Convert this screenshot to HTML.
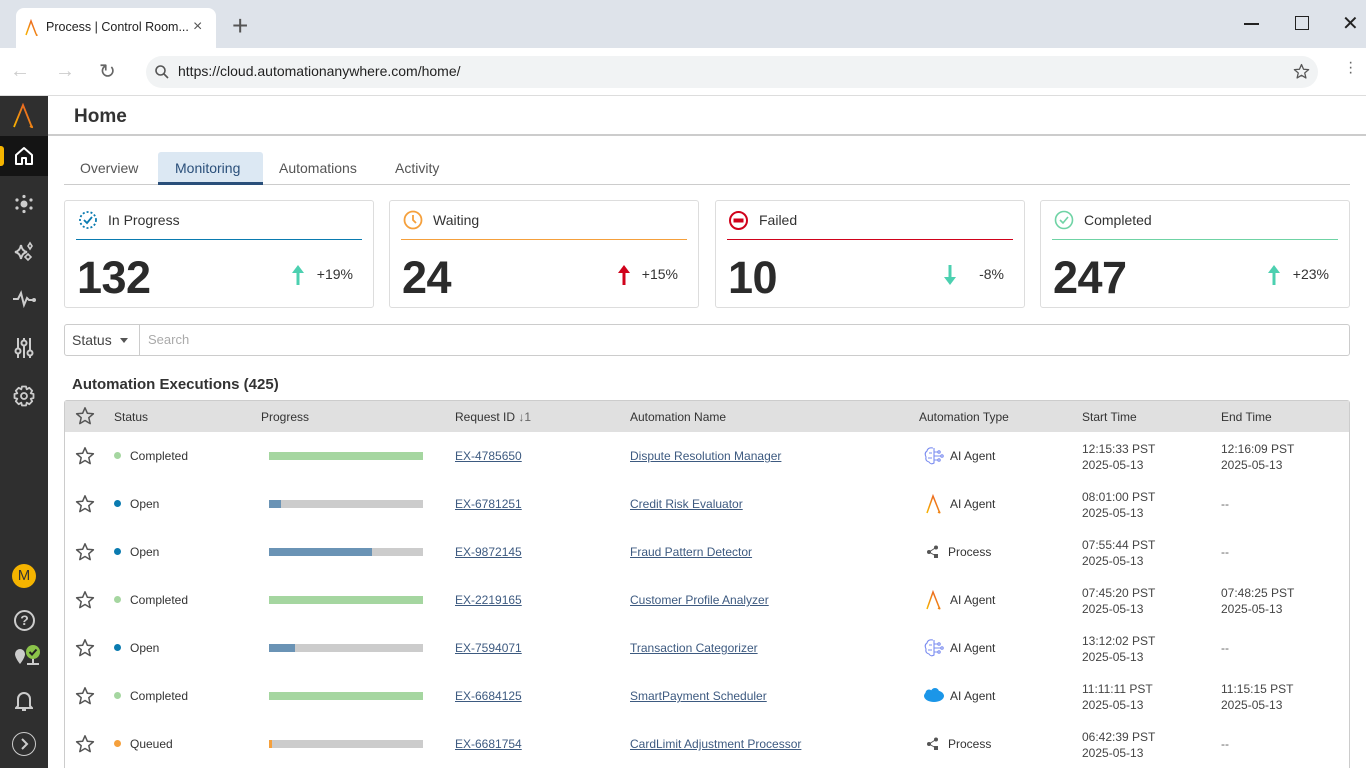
<!DOCTYPE html>
<html><head><meta charset="utf-8"><style>
*{margin:0;padding:0;box-sizing:border-box}
html,body{width:1366px;height:768px;overflow:hidden}
body{font-family:"Liberation Sans",sans-serif;background:#fff;position:relative;color:#222}
.a{position:absolute}
.t{font-size:12px;color:#333;white-space:nowrap}
.lnk{color:#3d5a80;text-decoration:underline;font-size:12px;white-space:nowrap}
.card{position:absolute;top:200px;width:310px;height:108px;border:1px solid #ddd;border-radius:3px;background:#fff}
.card .ti{position:absolute;left:43px;top:11px;font-size:14px;color:#333}
.card .ln{position:absolute;left:11px;right:11px;top:38px;height:1px}
.card .num{position:absolute;left:12px;top:51px;font-size:45px;font-weight:bold;color:#2b2b2b;letter-spacing:-0.5px}
.card .pc{position:absolute;right:20px;top:65px;font-size:14px;color:#333}
.card .ar{position:absolute;top:64px}
.bar{position:absolute;left:269px;width:154px;height:8px;background:#ccc}
.bar i{display:block;height:8px}
.dot{position:absolute;left:114px;width:7px;height:7px;border-radius:50%}
</style></head><body>
<svg width="0" height="0" style="position:absolute"><defs><symbol id="star" viewBox="0 0 20 20"><path d="M10 1.8 L12.4 7.3 L18.4 7.8 L13.8 11.7 L15.2 17.6 L10 14.5 L4.8 17.6 L6.2 11.7 L1.6 7.8 L7.6 7.3 Z" fill="none" stroke="#555" stroke-width="1.5" stroke-linejoin="round"/></symbol><linearGradient id="g" x1="0" y1="1" x2="1" y2="0"><stop offset="0" stop-color="#f7b500"/><stop offset="1" stop-color="#e8532b"/></linearGradient></defs></svg>
<div class="a" style="left:0;top:0;width:1366px;height:48px;background:#dee3ea"></div>
<div class="a" style="left:16px;top:8px;width:200px;height:40px;background:#fff;border-radius:8px 8px 0 0"></div>
<svg class="a" style="left:24px;top:19px" width="16" height="18" viewBox="0 0 16 18"><path d="M2 16 L7 2 L12 15 Q14 17 12 16" fill="none" stroke="url(#g)" stroke-width="1.5"/></svg>
<div class="a" style="left:46px;top:20px;font-size:12.5px;color:#222">Process | Control Room...</div>
<div class="a" style="left:193px;top:18px;font-size:16px;color:#555">×</div>
<div class="a" style="left:232px;top:10px;font-size:28px;color:#555;font-weight:300">+</div>
<div class="a" style="left:1244px;top:23px;width:15px;height:1.5px;background:#222"></div>
<div class="a" style="left:1295px;top:16px;width:14px;height:14px;border:1.5px solid #222"></div>
<div class="a" style="left:1342px;top:11px;font-size:20px;color:#222">✕</div>
<div class="a" style="left:0;top:48px;width:1366px;height:48px;background:#fff;border-bottom:1px solid #ddd"></div>
<div class="a" style="left:10px;top:60px;font-size:20px;color:#ccc">←</div>
<div class="a" style="left:55px;top:60px;font-size:20px;color:#ccc">→</div>
<div class="a" style="left:99px;top:59px;font-size:20px;color:#666">↻</div>
<div class="a" style="left:146px;top:56px;width:1172px;height:32px;background:#f1f3f4;border-radius:16px"></div>
<svg class="a" style="left:154px;top:64px" width="16" height="16"><circle cx="6.5" cy="6.5" r="4.5" fill="none" stroke="#555" stroke-width="1.6"/><path d="M10 10 L14 14" stroke="#555" stroke-width="1.6"/></svg>
<div class="a" style="left:178px;top:63px;font-size:14px;color:#222">https://cloud.automationanywhere.com/home/</div>
<svg class="a" style="left:1293px;top:63px" width="17" height="17"><use href="#star" width="17" height="17"/></svg>
<div class="a" style="left:1348px;top:60px;font-size:16px;color:#666;line-height:5px">·<br>·<br>·</div>
<div class="a" style="left:0;top:96px;width:48px;height:672px;background:#2f2f2f"></div>
<svg class="a" style="left:12px;top:103px" width="24" height="26" viewBox="0 0 24 26"><path d="M2 24 L11 2 L19 22 Q22 26 18 23" fill="none" stroke="url(#g)" stroke-width="1.8"/></svg>
<div class="a" style="left:0;top:136px;width:48px;height:40px;background:#141414"></div>
<div class="a" style="left:0;top:146px;width:4px;height:20px;background:#f5b400;border-radius:0 3px 3px 0"></div>
<svg class="a" style="left:14px;top:146px" width="20" height="20" viewBox="0 0 20 20"><path d="M2 9 L10 2 L18 9 V18 H12 V12 H8 V18 H2 Z" fill="none" stroke="#fff" stroke-width="2" stroke-linejoin="round"/></svg>
<svg class="a" style="left:14px;top:194px" width="20" height="20"><circle cx="10" cy="10" r="3.5" fill="#ccc"/><g fill="#ccc"><circle cx="10" cy="2.5" r="1.6"/><circle cx="10" cy="17.5" r="1.6"/><circle cx="3" cy="6" r="1.6"/><circle cx="17" cy="6" r="1.6"/><circle cx="3" cy="14" r="1.6"/><circle cx="17" cy="14" r="1.6"/></g></svg>
<svg class="a" style="left:13px;top:241px" width="22" height="22" viewBox="0 0 22 22"><path d="M8 4 Q9 10 14 11 Q9 12 8 18 Q7 12 2 11 Q7 10 8 4Z" fill="none" stroke="#ccc" stroke-width="2"/><path d="M17 2 L19 5 L17 8 L15 5Z M15 13 L18 16 L15 19 L12 16Z" fill="none" stroke="#ccc" stroke-width="1.6"/></svg>
<svg class="a" style="left:12px;top:290px" width="24" height="18"><path d="M1 9 H6 L9 3 L12 15 L15 8 L17 10 H22" fill="none" stroke="#ccc" stroke-width="2"/><circle cx="22" cy="10" r="2" fill="#ccc"/></svg>
<svg class="a" style="left:14px;top:337px" width="20" height="22"><g stroke="#ccc" stroke-width="2" fill="none"><path d="M4 1V21M10 1V21M16 1V21"/><circle cx="4" cy="14" r="2.5" fill="#2f2f2f"/><circle cx="10" cy="6" r="2.5" fill="#2f2f2f"/><circle cx="16" cy="16" r="2.5" fill="#2f2f2f"/></g></svg>
<svg class="a" style="left:13px;top:385px" width="22" height="22" viewBox="0 0 22 22"><path d="M9 1.5 H13 L13.7 4.3 L16.3 2.8 L19.2 5.7 L17.7 8.3 L20.5 9 V13 L17.7 13.7 L19.2 16.3 L16.3 19.2 L13.7 17.7 L13 20.5 H9 L8.3 17.7 L5.7 19.2 L2.8 16.3 L4.3 13.7 L1.5 13 V9 L4.3 8.3 L2.8 5.7 L5.7 2.8 L8.3 4.3 Z" fill="none" stroke="#ccc" stroke-width="1.8" stroke-linejoin="round"/><circle cx="11" cy="11" r="3" fill="none" stroke="#ccc" stroke-width="1.8"/></svg>
<div class="a" style="left:12px;top:564px;width:24px;height:24px;border-radius:50%;background:#f5b400;color:#333;font-size:15px;text-align:center;line-height:24px">M</div>
<div class="a" style="left:14px;top:610px;width:21px;height:21px;border-radius:50%;border:2px solid #ccc;color:#ccc;font-size:14px;font-weight:bold;text-align:center;line-height:17px">?</div>
<svg class="a" style="left:13px;top:644px" width="28" height="26"><path d="M7 8 a5 5 0 0 1 10 0 c0 4-5 10-5 10 s-5-6-5-10z" fill="#ccc" transform="translate(-5,2)"/><path d="M14 20 H26 M20 14 V20" stroke="#ccc" stroke-width="2"/><circle cx="20" cy="8" r="7" fill="#8bc34a"/><path d="M16.5 8 L19 10.5 L23.5 5.5" stroke="#222" stroke-width="2" fill="none"/></svg>
<svg class="a" style="left:15px;top:690px" width="18" height="22"><path d="M3 16 V9 a6 6 0 0 1 12 0 V16 L17 18 H1 Z" fill="none" stroke="#ccc" stroke-width="2"/><path d="M7 20 H11" stroke="#ccc" stroke-width="2"/></svg>
<div class="a" style="left:12px;top:732px;width:24px;height:24px;border-radius:50%;border:1.5px solid #ccc"></div>
<svg class="a" style="left:20px;top:738px" width="10" height="12"><path d="M2 1 L7 6 L2 11" fill="none" stroke="#ccc" stroke-width="2"/></svg>
<div class="a" style="left:74px;top:106px;font-size:19px;font-weight:bold;color:#333">Home</div>
<div class="a" style="left:48px;top:134px;width:1318px;height:2px;background:#ccc"></div>
<div class="a" style="left:64px;top:184px;width:1286px;height:1px;background:#ccc"></div>
<div class="a" style="left:158px;top:152px;width:105px;height:33px;background:#dce8f3;border-radius:3px 3px 0 0;border-bottom:3px solid #2a4f7a"></div>
<div class="a" style="left:80px;top:160px;font-size:14px;color:#555">Overview</div>
<div class="a" style="left:175px;top:160px;font-size:14px;color:#2a4f7a">Monitoring</div>
<div class="a" style="left:279px;top:160px;font-size:14px;color:#555">Automations</div>
<div class="a" style="left:395px;top:160px;font-size:14px;color:#555">Activity</div>
<div class="card" style="left:64px">
<svg class="a" style="left:13px;top:9px" width="20" height="20"><circle cx="10" cy="10" r="8" fill="none" stroke="#0a7bb0" stroke-width="1.8" stroke-dasharray="2 2"/><path d="M6 10 L9 13 L14 7" fill="none" stroke="#0a7bb0" stroke-width="1.8"/></svg>
<div class="ti">In Progress</div><div class="ln" style="background:#0a7bb0"></div>
<div class="num">132</div>
<svg class="ar" style="left:227px" width="12" height="20"><path d="M6 0 L12 8 H7.5 V20 H4.5 V8 H0Z" fill="#4cd0b0"/></svg>
<div class="pc">+19%</div></div>
<div class="card" style="left:389px">
<svg class="a" style="left:13px;top:9px" width="20" height="20"><circle cx="10" cy="10" r="8.5" fill="none" stroke="#f5a03c" stroke-width="1.8"/><path d="M10 5 V10 L13 13" fill="none" stroke="#f5a03c" stroke-width="1.8"/></svg>
<div class="ti">Waiting</div><div class="ln" style="background:#f5a03c"></div>
<div class="num">24</div>
<svg class="ar" style="left:228px" width="12" height="20"><path d="M6 0 L12 8 H7.5 V20 H4.5 V8 H0Z" fill="#d0021b"/></svg>
<div class="pc">+15%</div></div>
<div class="card" style="left:715px">
<svg class="a" style="left:12px;top:9px" width="21" height="21"><circle cx="10.5" cy="10.5" r="8.5" fill="none" stroke="#d0021b" stroke-width="2"/><rect x="5.5" y="8.5" width="10" height="4" fill="#d0021b"/></svg>
<div class="ti" style="left:43px">Failed</div><div class="ln" style="background:#d0021b"></div>
<div class="num">10</div>
<svg class="ar" style="left:228px" width="12" height="20"><path d="M6 20 L12 12 H7.5 V0 H4.5 V12 H0Z" fill="#4cd0b0"/></svg>
<div class="pc">-8%</div></div>
<div class="card" style="left:1040px">
<svg class="a" style="left:13px;top:9px" width="20" height="20"><circle cx="10" cy="10" r="8.5" fill="none" stroke="#6fd3a5" stroke-width="1.6"/><path d="M6 10 L9 13 L14 7" fill="none" stroke="#6fd3a5" stroke-width="1.6"/></svg>
<div class="ti">Completed</div><div class="ln" style="background:#6fd3a5"></div>
<div class="num">247</div>
<svg class="ar" style="left:227px" width="12" height="20"><path d="M6 0 L12 8 H7.5 V20 H4.5 V8 H0Z" fill="#4cd0b0"/></svg>
<div class="pc">+23%</div></div>
<div class="a" style="left:64px;top:324px;width:1286px;height:32px;border:1px solid #ccc;border-radius:3px"></div>
<div class="a" style="left:139px;top:325px;width:1px;height:30px;background:#ccc"></div>
<div class="a" style="left:72px;top:332px;font-size:14px;color:#444">Status</div>
<div class="a" style="left:120px;top:338px;border:4px solid transparent;border-top:5px solid #555"></div>
<div class="a" style="left:148px;top:332px;font-size:13px;color:#aaa">Search</div>
<div class="a" style="left:72px;top:376px;font-size:15px;font-weight:bold;color:#333">Automation Executions (425)</div>
<div class="a" style="left:64px;top:400px;width:1286px;height:368px;border:1px solid #ccc;border-bottom:none;border-radius:3px 3px 0 0"></div>
<div class="a" style="left:65px;top:401px;width:1284px;height:31px;background:#e0e0e0"></div>
<svg class="a" style="left:75px;top:406px" width="20" height="20"><use href="#star"/></svg>
<div class="a t" style="left:114px;top:410px">Status</div>
<div class="a t" style="left:261px;top:410px">Progress</div>
<div class="a t" style="left:455px;top:410px">Request ID <span style="color:#666">↓1</span></div>
<div class="a t" style="left:630px;top:410px">Automation Name</div>
<div class="a t" style="left:919px;top:410px">Automation Type</div>
<div class="a t" style="left:1082px;top:410px">Start Time</div>
<div class="a t" style="left:1221px;top:410px">End Time</div>
<div id="rows"></div>
<script>
var R=[["Completed","#a5d6a0",100,"EX-4785650","Dispute Resolution Manager","b","AI Agent","12:15:33 PST","12:16:09 PST"],
["Open","#0a7bb0",8,"EX-6781251","Credit Risk Evaluator","a","AI Agent","08:01:00 PST",""],
["Open","#0a7bb0",67,"EX-9872145","Fraud Pattern Detector","p","Process","07:55:44 PST",""],
["Completed","#a5d6a0",100,"EX-2219165","Customer Profile Analyzer","a","AI Agent","07:45:20 PST","07:48:25 PST"],
["Open","#0a7bb0",17,"EX-7594071","Transaction Categorizer","b","AI Agent","13:12:02 PST",""],
["Completed","#a5d6a0",100,"EX-6684125","SmartPayment Scheduler","s","AI Agent","11:11:11 PST","11:15:15 PST"],
["Queued","#f5a03c",2,"EX-6681754","CardLimit Adjustment Processor","p","Process","06:42:39 PST",""]];
var ic={b:'<svg width="22" height="22" viewBox="0 0 22 22"><g fill="none" stroke="#7a8cf0" stroke-width="1.1"><path d="M10 3 Q5 2 4 6 Q1 8 3 12 Q2 16 6 17 Q8 20 11 18 V3"/><path d="M11 7 H15 M11 11 H18 M11 15 H15 M6 8 H9 M5 13 H9"/><circle cx="16" cy="7" r="1.2"/><circle cx="19" cy="11" r="1.2"/><circle cx="16" cy="15" r="1.2"/></g></svg>',
a:'<svg width="22" height="22" viewBox="0 0 22 22"><path d="M4 20 L10 3 L16 18 Q18 21 15 19" fill="none" stroke="url(#g)" stroke-width="1.5"/></svg>',
p:'<svg width="22" height="22" viewBox="0 0 22 22"><g fill="#555"><circle cx="6" cy="11" r="2"/><circle cx="13" cy="6.5" r="2"/><rect x="11" y="13" width="4" height="4"/></g><path d="M6 11 L13 6.5 M6 11 L13 15" stroke="#555"/></svg>',
s:'<svg width="22" height="22" viewBox="0 0 22 22"><ellipse cx="11" cy="11" rx="10" ry="6" fill="#1b96e8"/><circle cx="6" cy="8" r="3.5" fill="#1b96e8"/><circle cx="12" cy="7" r="4" fill="#1b96e8"/></svg>'};
var h='';R.forEach(function(r,i){var y=456+i*48;var pw=Math.round(154*r[2]/100);var pc=r[0]=="Completed"?"#a5d6a0":(r[0]=="Queued"?"#f5a03c":"#6a93b5");
h+='<svg class="a" style="left:75px;top:'+(y-10)+'px" width="20" height="20"><use href="#star"/></svg>';
h+='<div class="dot" style="top:'+(y-4)+'px;background:'+r[1]+'"></div>';
h+='<div class="a t" style="left:130px;top:'+(y-7)+'px">'+r[0]+'</div>';
h+='<div class="bar" style="top:'+(y-4)+'px"><i style="width:'+pw+'px;background:'+pc+'"></i></div>';
h+='<div class="a lnk" style="left:455px;top:'+(y-7)+'px">'+r[3]+'</div>';
h+='<div class="a lnk" style="left:630px;top:'+(y-7)+'px">'+r[4]+'</div>';
h+='<div class="a" style="left:923px;top:'+(y-11)+'px">'+ic[r[5]]+'</div>';
h+='<div class="a t" style="left:'+(r[6]=="Process"?948:950)+'px;top:'+(y-7)+'px">'+r[6]+'</div>';
h+='<div class="a t" style="left:1082px;top:'+(y-15)+'px;line-height:16px;color:#444">'+r[7]+'<br>2025-05-13</div>';
h+=r[8]?'<div class="a t" style="left:1221px;top:'+(y-15)+'px;line-height:16px;color:#444">'+r[8]+'<br>2025-05-13</div>':'<div class="a t" style="left:1221px;top:'+(y-7)+'px;color:#666">--</div>';
});document.getElementById('rows').innerHTML=h;
</script>
</body></html>
